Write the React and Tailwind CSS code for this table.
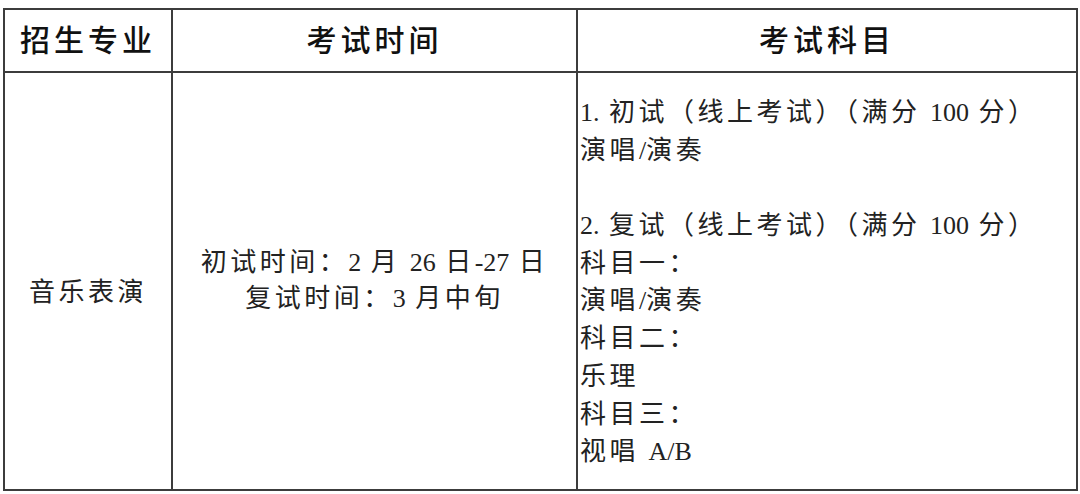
import React from "react";

const FONT = { fontFamily: '"Liberation Serif", "Noto Sans CJK SC", serif' };

// CJK runs get the wide spacing of the original document grid, Latin runs don't
function T({ s, track = "tracking-[3.5px]" }) {
  const parts = s.split(/([\u0000-\u00ff]+)/).filter(Boolean);
  return (
    <>
      {parts.map((p, i) =>
        /^[\u0000-\u00ff]+$/.test(p) ? (
          <span key={i} className="tracking-normal whitespace-pre [word-spacing:3px]">{p}</span>
        ) : (
          <span key={i} className={track}>{p}</span>
        )
      )}
    </>
  );
}

const subjects = [
  "1. 初试（线上考试）（满分 100 分）",
  "演唱/演奏",
  "",
  "2. 复试（线上考试）（满分 100 分）",
  "科目一：",
  "演唱/演奏",
  "科目二：",
  "乐理",
  "科目三：",
  "视唱 A/B",
];

export default function App() {
  return (
    <div className="w-[1080px] h-[494px] bg-white pt-[8px] pl-[3px]" style={FONT}>
      <div className="w-[1075px] h-[483px] border-2 border-[#3c3c3c] grid grid-cols-[168px_405px_1fr] grid-rows-[63px_1fr]">
        {/* Header */}
        <div className="border-r-2 border-b-2 border-[#3c3c3c] flex items-center justify-center text-[30px] font-medium text-[#111]">
          <T s="招生专业" track="tracking-[4px]" />
        </div>
        <div className="border-r-2 border-b-2 border-[#3c3c3c] flex items-center justify-center text-[30px] font-medium text-[#111]">
          <T s="考试时间" track="tracking-[4px]" />
        </div>
        <div className="border-b-2 border-[#3c3c3c] flex items-center justify-center text-[30px] font-medium text-[#111]">
          <T s="考试科目" track="tracking-[4px]" />
        </div>

        {/* Body */}
        <div className="border-r-2 border-[#3c3c3c] flex items-center justify-center pt-[22px] text-[26px] text-[#222]">
          <T s="音乐表演" />
        </div>
        <div className="border-r-2 border-[#3c3c3c] flex flex-col items-center justify-center text-[26px] leading-[36px] text-[#222]">
          <div><T s="初试时间：2 月 26 日-27 日" /></div>
          <div><T s="复试时间：3 月中旬" /></div>
        </div>
        <div className="pt-[21px] pl-[2px] text-[26px] leading-[37.7px] text-[#222]">
          {subjects.map((line, i) => (
            <div key={i} className="h-[37.7px] whitespace-nowrap">
              <T s={line} />
            </div>
          ))}
        </div>
      </div>
    </div>
  );
}
